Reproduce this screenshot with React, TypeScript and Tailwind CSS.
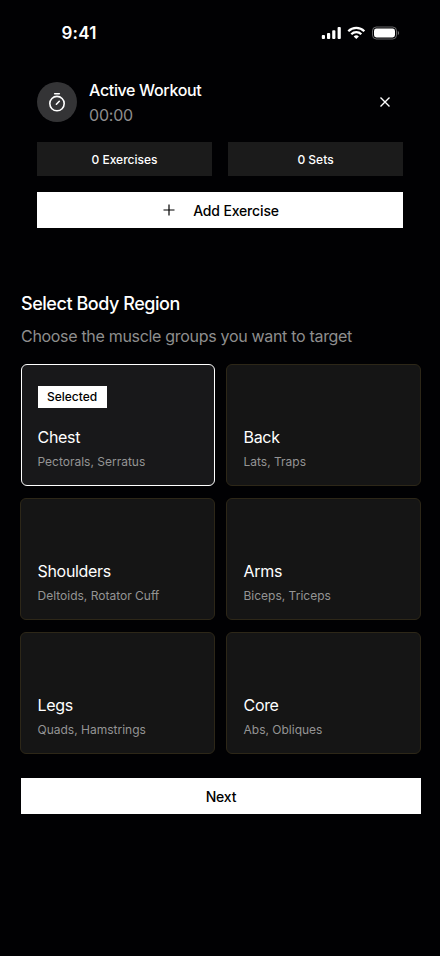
type Region = { name: string; muscles: string; selected?: boolean };

const regions: Region[] = [
  { name: "Chest", muscles: "Pectorals, Serratus", selected: true },
  { name: "Back", muscles: "Lats, Traps" },
  { name: "Shoulders", muscles: "Deltoids, Rotator Cuff" },
  { name: "Arms", muscles: "Biceps, Triceps" },
  { name: "Legs", muscles: "Quads, Hamstrings" },
  { name: "Core", muscles: "Abs, Obliques" },
];

function StatusBar() {
  return (
    <div className="flex h-[66px] items-center justify-between pr-[41px] pl-[61.5px]">
      <span className="text-[17px] leading-[22px] font-semibold tracking-[0.2px]">9:41</span>
      <svg width="78" height="14" viewBox="0 0 78 14" fill="white">
        <rect x="0.8" y="9" width="3.2" height="4" rx="0.9" />
        <rect x="6" y="7" width="3.2" height="6" rx="0.9" />
        <rect x="11.2" y="4.2" width="3.2" height="8.8" rx="0.9" />
        <rect x="16.6" y="1" width="3.2" height="12" rx="0.9" />
        <g fill="none" stroke="white" strokeWidth="2.3">
          <path d="M27.3 5.2A11.4 11.4 0 0 1 43.3 5.2" />
          <path d="M30.3 8.3A7 7 0 0 1 40.3 8.3" />
        </g>
        <path d="M32.7 10.4A4 4 0 0 1 37.9 10.4L35.3 13Z" />
        <rect x="51.5" y="1" width="24" height="12" rx="3.8" fill="none" stroke="white" strokeOpacity="0.4" />
        <rect x="53" y="2.5" width="21" height="9" rx="2.4" />
        <path d="M76.8 5v4c.8-.3 1.2-1.1 1.2-2s-.4-1.7-1.2-2Z" fillOpacity="0.45" />
      </svg>
    </div>
  );
}

function StopwatchIcon() {
  return (
    <svg width="20" height="20" viewBox="0 0 20 20" fill="none" stroke="white" strokeWidth="1.6">
      <circle cx="10" cy="11.6" r="7.2" />
      <path d="M7.7 1.8h4.6M9.4 12.2l2.9-2.9" strokeLinecap="round" />
    </svg>
  );
}

function WorkoutHeader() {
  return (
    <section className="flex flex-col gap-4 px-[37px] pt-3">
      <div className="flex h-12 items-start">
        <div className="mt-1 flex size-10 items-center justify-center rounded-full bg-[#343436]">
          <StopwatchIcon />
        </div>
        <div className="ml-3 flex flex-col">
          <h1 className="text-base leading-6 font-medium tracking-[-0.34px]">Active Workout</h1>
          <p className="mt-px text-base leading-6 font-normal tracking-[-0.2px] text-[#8e8e8e]">00:00</p>
        </div>
        <button aria-label="Close" className="mt-[18px] mr-3 ml-auto">
          <svg width="12" height="12" viewBox="0 0 12 12" fill="none" stroke="white" strokeWidth="1.4">
            <path d="M1.5 1.5l9 9M10.5 1.5l-9 9" />
          </svg>
        </button>
      </div>
      <div className="grid grid-cols-2 gap-4 text-xs font-medium">
        <div className="flex h-[34px] items-center justify-center bg-[#1b1b1b] pt-px">0 Exercises</div>
        <div className="flex h-[34px] items-center justify-center bg-[#1b1b1b] pt-px">0 Sets</div>
      </div>
      <button className="flex h-9 items-center justify-center bg-white pt-px pl-0.5 text-sm font-medium tracking-[-0.15px] text-black">
        <svg className="mr-[18px] mb-px" width="12" height="12" viewBox="0 0 12 12" fill="none" stroke="black" strokeWidth="1.2">
          <path d="M6 .5v11M.5 6h11" />
        </svg>
        Add Exercise
      </button>
    </section>
  );
}

function RegionCard({ name, muscles, selected }: Region) {
  return (
    <div
      className={
        selected
          ? "flex h-[122px] flex-col justify-end rounded-md border border-white bg-[#18181a] px-4 pb-[13px]"
          : "-ml-[0.5px] flex h-[122px] flex-col justify-end rounded-md border border-[#2d2718] bg-[#151515] px-[16.5px] pb-[13px]"
      }
    >
      {selected && (
        <span className="mb-[17px] flex h-[22px] w-[69px] items-center justify-center bg-white text-xs font-medium text-black">
          Selected
        </span>
      )}
      <h3 className="text-base leading-6 font-normal tracking-[-0.31px]">{name}</h3>
      <p className="mt-[3px] text-xs leading-5 text-[#949494]">{muscles}</p>
    </div>
  );
}

export default function App() {
  return (
    <main className="h-[956px] w-[440px] overflow-hidden bg-[#010103] font-['Inter',sans-serif] text-white">
      <StatusBar />
      <WorkoutHeader />
      <section className="flex flex-col pt-[62px] pr-[19px] pl-[21px]">
        <h2 className="text-lg leading-[27px] font-medium tracking-[-0.46px]">Select Body Region</h2>
        <p className="mt-[7px] text-base leading-6 font-normal tracking-[-0.31px] text-[#8e8e8e]">
          Choose the muscle groups you want to target
        </p>
        <div className="mt-4 -ml-[0.5px] mr-[0.5px] grid grid-cols-2 gap-3">
          {regions.map((region) => (
            <RegionCard key={region.name} {...region} />
          ))}
        </div>
        <button className="mt-6 h-9 bg-white pt-px text-sm font-medium tracking-[-0.15px] text-black">Next</button>
      </section>
    </main>
  );
}
